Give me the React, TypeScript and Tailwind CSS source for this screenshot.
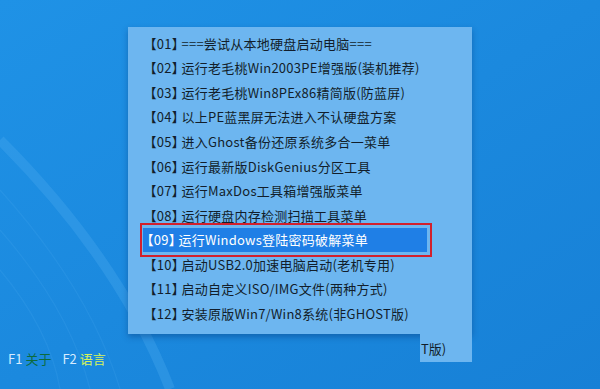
const items = [
  "===尝试从本地硬盘启动电脑===",
  "运行老毛桃Win2003PE增强版(装机推荐)",
  "运行老毛桃Win8PEx86精简版(防蓝屏)",
  "以上PE蓝黑屏无法进入不认硬盘方案",
  "进入Ghost备份还原系统多合一菜单",
  "运行最新版DiskGenius分区工具",
  "运行MaxDos工具箱增强版菜单",
  "运行硬盘内存检测扫描工具菜单",
  "运行Windows登陆密码破解菜单",
  "启动USB2.0加速电脑启动(老机专用)",
  "启动自定义ISO/IMG文件(两种方式)",
  "安装原版Win7/Win8系统(非GHOST版)",
];

function Backdrop() {
  return (
    <svg className="absolute inset-0" width="600" height="389" viewBox="0 0 600 389">
      <defs>
        <linearGradient id="bg" x1="0" y1="0" x2="1" y2="1">
          <stop offset="0" stopColor="#1f92e6" />
          <stop offset="1" stopColor="#1780d6" />
        </linearGradient>
      </defs>
      <rect width="600" height="389" fill="url(#bg)" />
      <path d="M0 140 Q120 260 170 389" stroke="#4aa8ee" strokeOpacity="0.35" strokeWidth="10" fill="none" />
      <path d="M0 190 Q90 290 120 389" stroke="#4aa8ee" strokeOpacity="0.2" strokeWidth="1.2" fill="none" />
      <path d="M0 230 Q70 310 90 389" stroke="#4aa8ee" strokeOpacity="0.2" strokeWidth="1.2" fill="none" />
      <path d="M0 270 Q50 330 60 389" stroke="#4aa8ee" strokeOpacity="0.2" strokeWidth="1.2" fill="none" />
    </svg>
  );
}

function Row({ n, text }: { n: number; text: string }) {
  return (
    <>
      <span>【</span>
      <span>{String(n).padStart(2, "0")}</span>
      <span>】</span>
      <span className="whitespace-nowrap ml-[3px]">{text}</span>
    </>
  );
}

export default function App() {
  return (
    <div
      className="relative w-[600px] h-[389px] overflow-hidden bg-[#1b8ae0] text-[#121e2b]"
      style={{ fontFamily: '"Noto Sans CJK SC", "Noto Sans", sans-serif' }}
    >
      <Backdrop />
      <div className="relative flex flex-col pt-[27px]">
        <div className="ml-[128px] w-[344px] h-[307px] bg-[#6db6f0] shadow-[0_3px_6px_rgba(0,40,100,0.35)] pt-[4px] text-[13px] tracking-[0.25px] [font-feature-settings:'halt']">
          {items.map((t, i) =>
            i === 8 ? (
              <div key={i} className="relative ml-[15px] w-[284px] h-[24.6px] flex items-center pl-[4px] bg-[#1f7fe6] text-white">
                <Row n={i + 1} text={t} />
                <div className="absolute -left-[3px] -top-[5px] -right-[5px] -bottom-[5px] border-2 border-[#d2202c]" />
              </div>
            ) : (
              <div key={i} className="h-[24.6px] flex items-center pl-[22px]">
                <Row n={i + 1} text={t} />
              </div>
            )
          )}
        </div>
        <div className="flex h-[34px]">
          <div className="w-[420px] flex items-end pl-[8px] pb-[1px] text-[13px] leading-[16px] gap-[3px] whitespace-nowrap">
            <span className="text-[#d8ecff]">F1</span>
            <span className="text-[#0d6b3c]">关于</span>
            <span className="ml-[8px] text-[#d8ecff]">F2</span>
            <span className="text-[#d6f25c]">语言</span>
          </div>
          <div className="w-[52px] h-[28px] bg-[#6db6f0] text-[13px] flex items-center pl-[5px] overflow-hidden">
            <span className="whitespace-nowrap -ml-[4px] pt-[2px]">T版)</span>
          </div>
        </div>
      </div>
    </div>
  );
}
